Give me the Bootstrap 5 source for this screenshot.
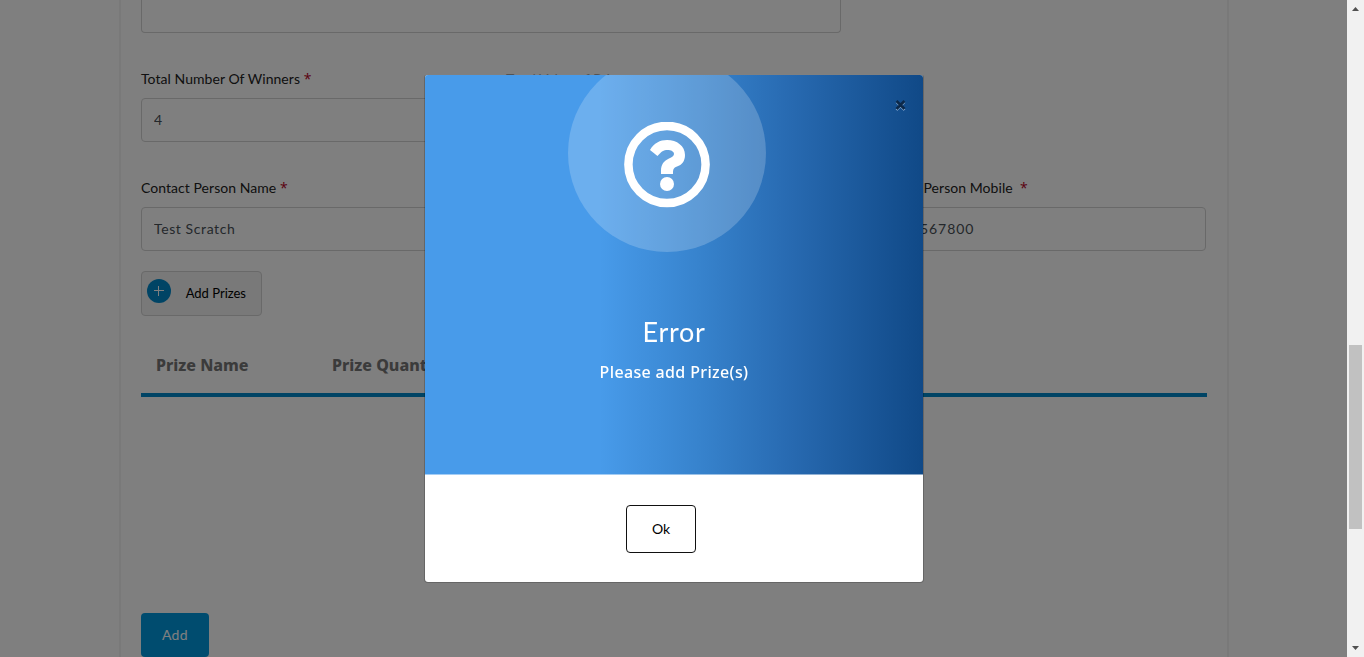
<!DOCTYPE html>
<html lang="en">
<head>
<meta charset="utf-8">
<title>Contest prizes</title>
<link href="https://cdn.jsdelivr.net/npm/bootstrap@5.3.0/dist/css/bootstrap.min.css" rel="stylesheet">
<style>
html,body{height:100%;overflow:hidden}
body{font-family:Lato,"Open Sans",sans-serif;font-size:14px;color:#212529;background:#fff}
.page-area{height:657px}
.form-panel{width:1110px;height:657px;margin-left:119px;border:solid #f3f3f3;border-width:0 2px;padding:0 5px}
.form-fields{width:1095px;margin:0}
.form-fields>*{padding-left:15px;padding-right:15px}
.field-col{padding-top:36px}
.field-label{display:block;height:20px;line-height:20px;margin-bottom:9px;color:#222;white-space:nowrap;font-size:14px;letter-spacing:.05px}
.star{color:#b5001e;font-family:"Open Sans",sans-serif;line-height:1}
.form-control.fld{height:44px;border:1px solid #d2d2d2;border-radius:4px;padding:0 12px 1px;font-size:14px;letter-spacing:.6px;color:#495057}
.form-control.fld.digits{letter-spacing:.9px}
.fld.top-area{width:700px;height:33px;border-top:0;border-radius:0 0 4px 4px}
.btn-prizes{width:121px;height:45px;border:1px solid #d2d2d2;border-radius:4px;background:#f2f2f2;padding:0 0 0 5px;font-size:13px;color:#000}
.btn-prizes svg{margin-bottom:5px}
.btn-prizes span{margin-right:15px}
.prize-head{width:1066px;height:65px;border-bottom:4px solid #0089cb;font:800 16px/24px "Noto Sans",sans-serif;color:#777;padding:21px 15px 0}
.prize-head span{width:176px;white-space:nowrap}
.prize-body{height:216px}
.btn-save{width:68px;height:44px;border:0;border-radius:4px;background:#0099df;color:#fff;font-size:14px;letter-spacing:.4px;padding-bottom:8px}
.modal-backdrop.show{opacity:.5;width:1347px}
.scrollbar-track{width:17px;height:657px;background:#f1f1f1;z-index:2000}
.scroll-thumb{width:13px;height:184px;background:#c1c1c1;margin-top:330px}
.modal.msg{width:1347px;padding:0;overflow:hidden}
.msg .modal-dialog{width:500px;margin:74px 0 0 424px}
.msg .modal-content{border-radius:4px;border:1px solid rgba(0,0,0,.2);border-top-color:rgba(128,128,128,.6);background-clip:padding-box;height:509px;overflow:hidden}
.msg-head{height:400px;background:linear-gradient(90deg,#489bea 35%,#3783cd 55%,#2769b0 74%,#104987 100%);color:#fff;overflow:hidden;border:solid rgba(255,255,255,.5);border-width:0 0 1px}
.halo{width:198px;height:198px;left:143px;top:-21px;border-radius:50%;background:rgba(255,255,255,.2)}
.q-icon{left:199px;top:47px}
.x-icon{left:470px;top:24px}
.msg-title{font:400 27px/32px Lato,sans-serif;padding-top:241px;margin:0 0 12px;letter-spacing:.7px}
.msg-text{font:500 16px/24px "Noto Sans",sans-serif;letter-spacing:.35px}
.btn-ok{width:70px;height:48px;border:1px solid #111;border-radius:4px;background:#fff;color:#000;font-size:14px;padding-bottom:7px;margin:30px 0 0 201px}
</style>
</head>
<body>
<div class="page-area">
 <main class="form-panel">
  <div class="row form-fields">
   <div class="col-12"><div class="form-control fld top-area"></div></div>
   <div class="col-4 field-col"><label class="field-label">Total Number Of Winners <span class="star">*</span></label><input class="form-control fld" value="4"></div>
   <div class="col-4 field-col"><label class="field-label">Total Value of Prizes</label><input class="form-control fld" value=""></div>
   <div class="col-4"></div>
   <div class="col-4 field-col"><label class="field-label">Contact Person Name <span class="star">*</span></label><input class="form-control fld" value="Test Scratch"></div>
   <div class="col-4 field-col"><label class="field-label">Contact Person Email <span class="star">*</span></label><input class="form-control fld" value=""></div>
   <div class="col-4 field-col"><label class="field-label">Contact Person Mobile &nbsp;<span class="star">*</span></label><input class="form-control fld digits" value="1234567800"></div>
   <div class="col-12" style="padding-top:20px">
    <button class="btn btn-prizes d-flex align-items-center"><svg width="24" height="24" viewBox="0 0 24 24"><circle cx="12" cy="12" r="12" fill="#0089cb"/><path d="M7 11.5h10M11.5 7v10" stroke="#fff"/></svg><span class="ms-auto">Add Prizes</span></button>
    <div class="prize-head d-flex mt-3"><span>Prize Name</span><span>Prize Quantity</span></div>
    <div class="prize-body"></div>
    <button class="btn btn-save">Add</button>
   </div>
  </div>
 </main>
</div>
<div class="modal-backdrop show"></div>
<div class="modal msg show d-block" tabindex="-1">
 <div class="modal-dialog">
  <div class="modal-content">
   <div class="msg-head position-relative text-center">
    <div class="halo position-absolute"></div>
    <svg class="q-icon position-absolute" width="86" height="86" viewBox="0 0 86 86"><circle cx="43" cy="42.500" r="38.600" fill="none" stroke="#fff" stroke-width="8.500"/><path d="M26 28C30 21 36 18 43 18C53 18 61 24 61 33C61 39 58 43 53 44.500C49.500 46 49 47 49 52H37V49C37 42 40 39 45 36.500C48 35 50 34 50 32C50 29.500 47 28 43.500 28C39.500 28 37.500 29.500 33.500 34Z" fill="#fff"/><circle cx="43" cy="62" r="7" fill="#fff"/></svg>
    <svg class="x-icon position-absolute" width="11" height="13" viewBox="0 0 11 13"><path d="M1.500 3l8 8M9.500 3l-8 8" stroke="#9bb9da" stroke-width="2.400"/><path d="M1.500 2l8 8M9.500 2l-8 8" stroke="#0b2849" stroke-width="2.600"/></svg>
    <h4 class="msg-title">Error</h4>
    <div class="msg-text">Please add Prize(s)</div>
   </div>
   <div><button class="btn btn-ok">Ok</button></div>
  </div>
 </div>
</div>
<div class="scrollbar-track position-fixed top-0 end-0 d-flex flex-column align-items-center">
 <svg width="9" height="15" viewBox="0 0 9 15"><path d="M1 11l3.500-4L8 11z" fill="#505050"/></svg>
 <div class="scroll-thumb"></div>
 <svg class="mt-auto" width="9" height="15" viewBox="0 0 9 15"><path d="M1 4h7L4.500 8z" fill="#505050"/></svg>
</div>
<script src="https://cdn.jsdelivr.net/npm/bootstrap@5.3.0/dist/js/bootstrap.bundle.min.js"></script>
</body>
</html>
